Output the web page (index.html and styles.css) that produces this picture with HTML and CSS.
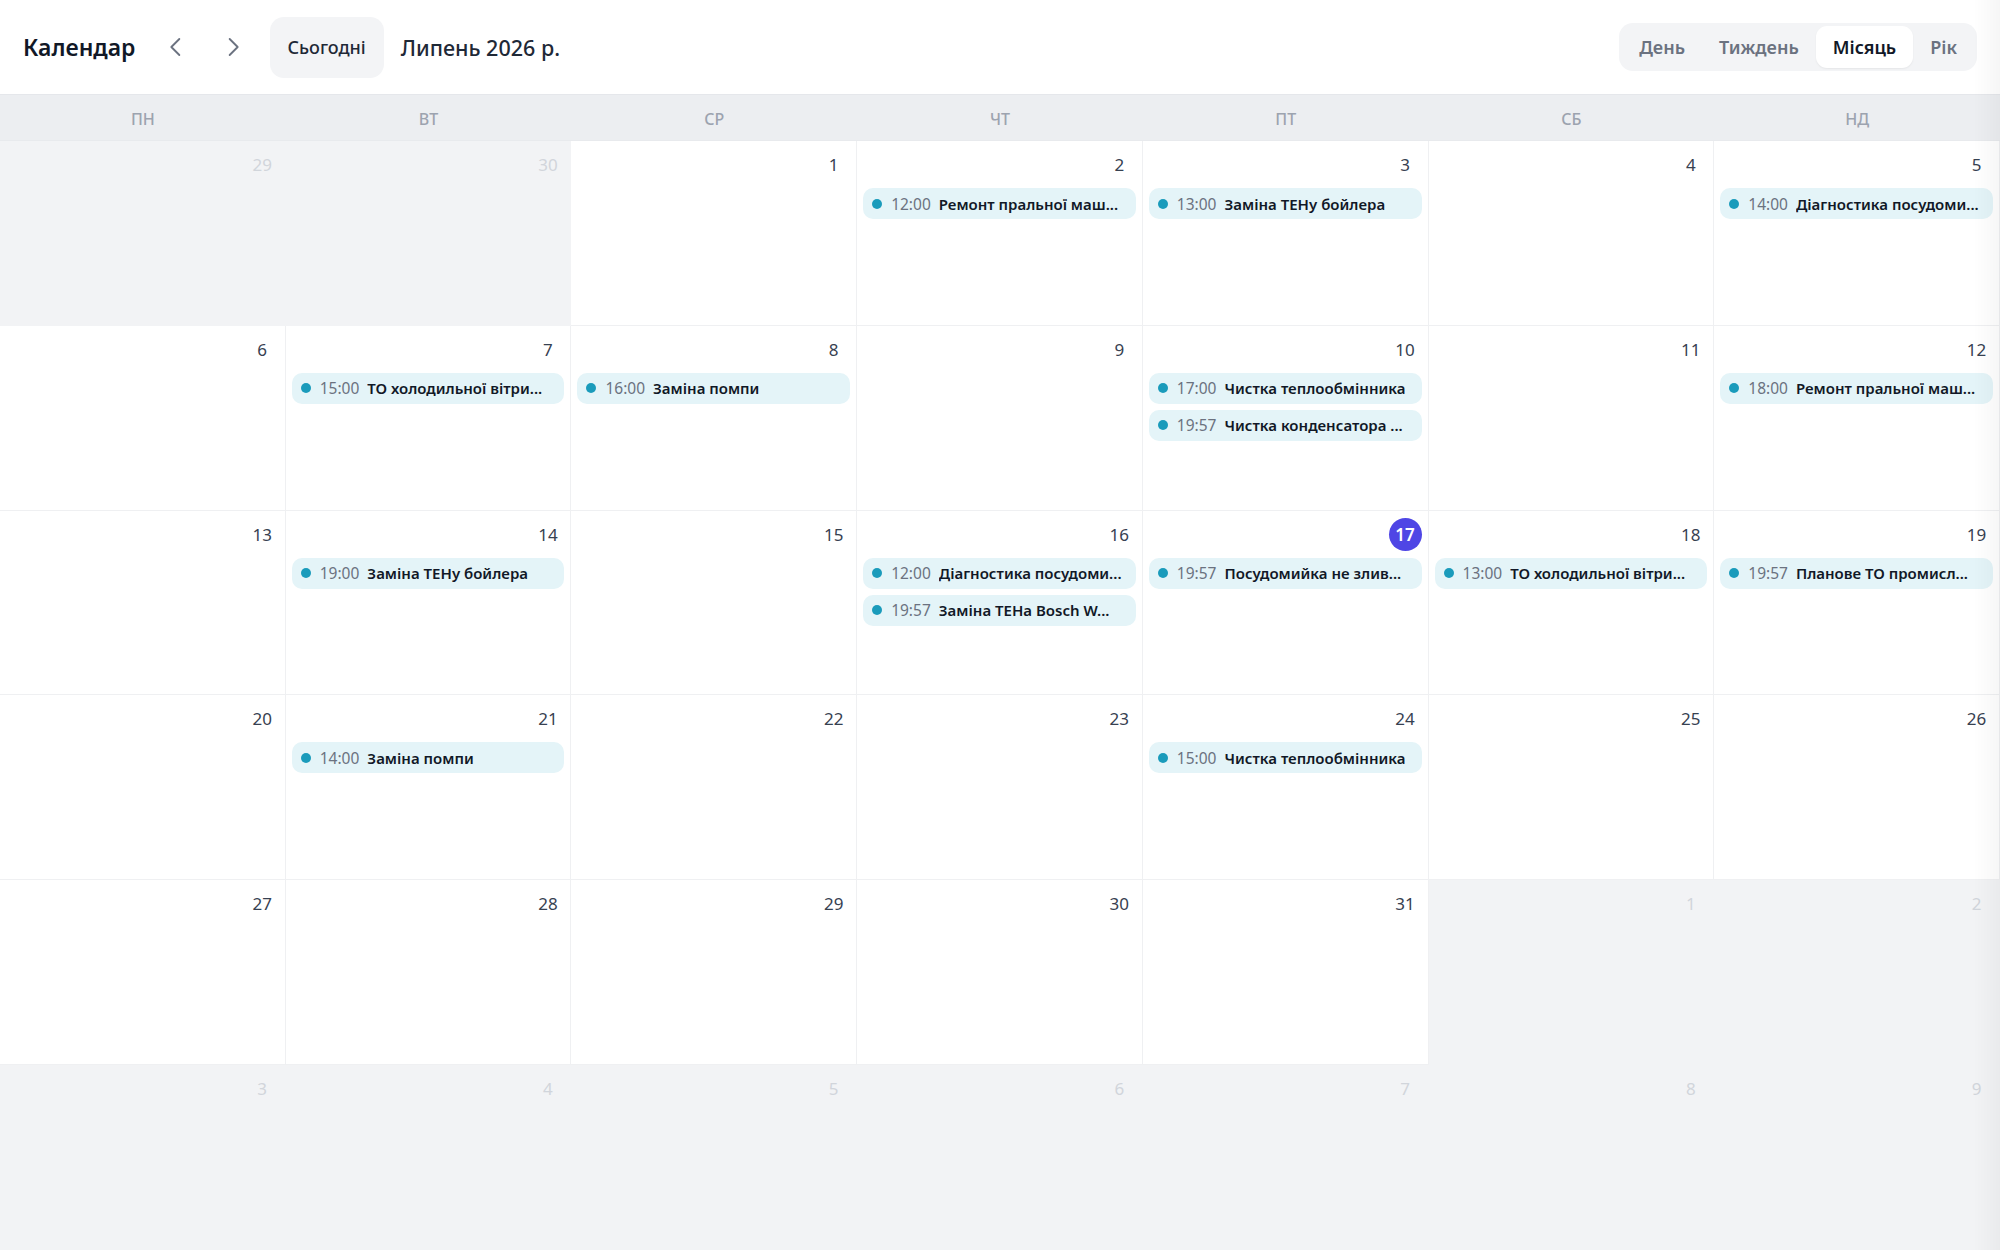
FILE: index.html
```html
<!doctype html>
<html lang="uk">
    <head>
        <meta charset="UTF-8" />
        <meta name="viewport" content="width=device-width, initial-scale=1.0" />
        <title>Календар</title>
        <link rel="stylesheet" href="styles.css">
    </head>
    <body>
        <header class="toolbar">
            <div class="toolbar-left">
                <h1>Календар</h1>
                <button class="nav-btn" aria-label="Назад">
                    <svg viewBox="0 0 24 24" fill="none" stroke="currentColor" stroke-width="1.4" stroke-linecap="round" stroke-linejoin="round"><path d="M14.5 6l-6 6 6 6" /></svg>
                </button>
                <button class="nav-btn" aria-label="Вперед">
                    <svg viewBox="0 0 24 24" fill="none" stroke="currentColor" stroke-width="1.4" stroke-linecap="round" stroke-linejoin="round"><path d="M9.5 6l6 6-6 6" /></svg>
                </button>
                <button class="today-btn">Сьогодні</button>
                <span class="period">Липень 2026 р.</span>
            </div>
            <div class="view-switch">
                <button>День</button>
                <button>Тиждень</button>
                <button class="active">Місяць</button>
                <button>Рік</button>
            </div>
        </header>

        <div class="weekdays">
            <div>ПН</div>
            <div>ВТ</div>
            <div>СР</div>
            <div>ЧТ</div>
            <div>ПТ</div>
            <div>СБ</div>
            <div>НД</div>
        </div>

        <div class="month">
            <!-- week 1 -->
            <div class="day outside"><div class="day-num">29</div></div>
            <div class="day outside"><div class="day-num">30</div></div>
            <div class="day"><div class="day-num">1</div></div>
            <div class="day">
                <div class="day-num">2</div>
                <div class="event"><span class="event-dot"></span><span class="event-time">12:00</span><span class="event-title">Ремонт пральної маш...</span></div>
            </div>
            <div class="day">
                <div class="day-num">3</div>
                <div class="event"><span class="event-dot"></span><span class="event-time">13:00</span><span class="event-title">Заміна ТЕНу бойлера</span></div>
            </div>
            <div class="day"><div class="day-num">4</div></div>
            <div class="day">
                <div class="day-num">5</div>
                <div class="event"><span class="event-dot"></span><span class="event-time">14:00</span><span class="event-title">Діагностика посудоми...</span></div>
            </div>

            <!-- week 2 -->
            <div class="day"><div class="day-num">6</div></div>
            <div class="day">
                <div class="day-num">7</div>
                <div class="event"><span class="event-dot"></span><span class="event-time">15:00</span><span class="event-title">ТО холодильної вітри...</span></div>
            </div>
            <div class="day">
                <div class="day-num">8</div>
                <div class="event"><span class="event-dot"></span><span class="event-time">16:00</span><span class="event-title">Заміна помпи</span></div>
            </div>
            <div class="day"><div class="day-num">9</div></div>
            <div class="day">
                <div class="day-num">10</div>
                <div class="event"><span class="event-dot"></span><span class="event-time">17:00</span><span class="event-title">Чистка теплообмінника</span></div>
                <div class="event"><span class="event-dot"></span><span class="event-time">19:57</span><span class="event-title">Чистка конденсатора ...</span></div>
            </div>
            <div class="day"><div class="day-num">11</div></div>
            <div class="day">
                <div class="day-num">12</div>
                <div class="event"><span class="event-dot"></span><span class="event-time">18:00</span><span class="event-title">Ремонт пральної маш...</span></div>
            </div>

            <!-- week 3 -->
            <div class="day"><div class="day-num">13</div></div>
            <div class="day">
                <div class="day-num">14</div>
                <div class="event"><span class="event-dot"></span><span class="event-time">19:00</span><span class="event-title">Заміна ТЕНу бойлера</span></div>
            </div>
            <div class="day"><div class="day-num">15</div></div>
            <div class="day">
                <div class="day-num">16</div>
                <div class="event"><span class="event-dot"></span><span class="event-time">12:00</span><span class="event-title">Діагностика посудоми...</span></div>
                <div class="event"><span class="event-dot"></span><span class="event-time">19:57</span><span class="event-title">Заміна ТЕНа Bosch W...</span></div>
            </div>
            <div class="day">
                <div class="day-num today">17</div>
                <div class="event"><span class="event-dot"></span><span class="event-time">19:57</span><span class="event-title">Посудомийка не злив...</span></div>
            </div>
            <div class="day">
                <div class="day-num">18</div>
                <div class="event"><span class="event-dot"></span><span class="event-time">13:00</span><span class="event-title">ТО холодильної вітри...</span></div>
            </div>
            <div class="day">
                <div class="day-num">19</div>
                <div class="event"><span class="event-dot"></span><span class="event-time">19:57</span><span class="event-title">Планове ТО промисл...</span></div>
            </div>

            <!-- week 4 -->
            <div class="day"><div class="day-num">20</div></div>
            <div class="day">
                <div class="day-num">21</div>
                <div class="event"><span class="event-dot"></span><span class="event-time">14:00</span><span class="event-title">Заміна помпи</span></div>
            </div>
            <div class="day"><div class="day-num">22</div></div>
            <div class="day"><div class="day-num">23</div></div>
            <div class="day">
                <div class="day-num">24</div>
                <div class="event"><span class="event-dot"></span><span class="event-time">15:00</span><span class="event-title">Чистка теплообмінника</span></div>
            </div>
            <div class="day"><div class="day-num">25</div></div>
            <div class="day"><div class="day-num">26</div></div>

            <!-- week 5 -->
            <div class="day"><div class="day-num">27</div></div>
            <div class="day"><div class="day-num">28</div></div>
            <div class="day"><div class="day-num">29</div></div>
            <div class="day"><div class="day-num">30</div></div>
            <div class="day"><div class="day-num">31</div></div>
            <div class="day outside"><div class="day-num">1</div></div>
            <div class="day outside"><div class="day-num">2</div></div>

            <!-- week 6 -->
            <div class="day outside"><div class="day-num">3</div></div>
            <div class="day outside"><div class="day-num">4</div></div>
            <div class="day outside"><div class="day-num">5</div></div>
            <div class="day outside"><div class="day-num">6</div></div>
            <div class="day outside"><div class="day-num">7</div></div>
            <div class="day outside"><div class="day-num">8</div></div>
            <div class="day outside"><div class="day-num">9</div></div>
        </div>

        <div class="edge-fade"></div>
    </body>
</html>
```

FILE: styles.css
```css
* {
    box-sizing: border-box;
}
html,
body {
    margin: 0;
    height: 100%;
}
body {
    font-family: "Noto Sans", "Open Sans", sans-serif;
    color: #1f2937;
    background: #fff;
    display: flex;
    flex-direction: column;
    height: 100vh;
    overflow: hidden;
}
button {
    font-family: inherit;
    cursor: pointer;
}

/* toolbar */
.toolbar {
    flex: none;
    height: 94px;
    display: flex;
    align-items: center;
    justify-content: space-between;
    padding: 0 23px;
}
.toolbar-left {
    display: flex;
    align-items: center;
    gap: 17px;
}
.toolbar h1 {
    margin: 0 3px 0 0;
    font-size: 23px;
    font-weight: 600;
    color: #111827;
}
.nav-btn {
    width: 40px;
    height: 40px;
    padding: 0;
    border: none;
    background: none;
    color: #6b7280;
    display: flex;
    align-items: center;
    justify-content: center;
}
.nav-btn svg {
    width: 32px;
    height: 32px;
}
.today-btn {
    height: 61px;
    padding: 0 18px;
    border: none;
    border-radius: 14px;
    background: #f3f4f6;
    color: #1f2937;
    font-size: 18px;
    font-weight: 500;
}
.period {
    font-size: 21.5px;
    font-weight: 500;
    color: #1f2937;
}
.view-switch {
    display: flex;
    height: 48px;
    padding: 3px;
    border-radius: 14px;
    background: #f3f4f6;
}
.view-switch button {
    padding: 0 17px;
    border: none;
    border-radius: 11px;
    background: none;
    color: #6b7280;
    font-size: 18px;
    font-weight: 600;
}
.view-switch .active {
    background: #fff;
    color: #111827;
    box-shadow: 0 1px 2px rgba(0, 0, 0, 0.06);
}

/* weekday band */
.weekdays {
    flex: none;
    height: 47px;
    display: grid;
    grid-template-columns: repeat(7, 1fr);
    background: #eceef1;
    border-top: 1px solid #e5e7eb;
    border-bottom: 1px solid #e8eaed;
}
.weekdays div {
    display: flex;
    align-items: center;
    justify-content: center;
    padding-top: 2px;
    font-size: 16px;
    font-weight: 500;
    color: #9ca3af;
}

/* month grid */
.month {
    flex: 1;
    min-height: 0;
    display: grid;
    grid-template-columns: repeat(7, 1fr);
    grid-template-rows: repeat(6, 1fr);
}
.day {
    min-width: 0;
    overflow: hidden;
    padding: 7px 6px;
    display: flex;
    flex-direction: column;
    gap: 5px;
    border-right: 1px solid #eff0f2;
    border-bottom: 1px solid #eff0f2;
}
.day.outside {
    background: #f2f3f5;
    border-color: #f2f3f5;
}
.day-num {
    align-self: flex-end;
    width: 33px;
    height: 33px;
    margin-bottom: 1px;
    line-height: 33px;
    text-align: center;
    font-size: 17px;
    color: #374151;
}
.outside .day-num {
    color: #d1d5db;
}
.day-num.today {
    border-radius: 50%;
    background: #4f46e5;
    color: #fff;
    font-weight: 600;
}
.event {
    display: flex;
    align-items: center;
    flex: none;
    height: 31px;
    margin-top: 1px;
    padding: 0 9px;
    border-radius: 10px;
    background: #e4f4f8;
    white-space: nowrap;
    overflow: hidden;
}
.event-dot {
    flex: none;
    width: 10px;
    height: 10px;
    margin-right: 9px;
    border-radius: 50%;
    background: #1a9bbb;
}
.event-time {
    flex: none;
    margin-right: 8px;
    font-size: 15.5px;
    color: #6b7280;
}
.event-title {
    overflow: hidden;
    text-overflow: ellipsis;
    font-size: 15px;
    font-weight: 600;
    color: #111827;
}

.edge-fade {
    position: fixed;
    top: 0;
    right: 0;
    bottom: 0;
    width: 26px;
    pointer-events: none;
    background: linear-gradient(to right, rgba(0, 0, 0, 0), rgba(0, 0, 0, 0.035));
}
```
